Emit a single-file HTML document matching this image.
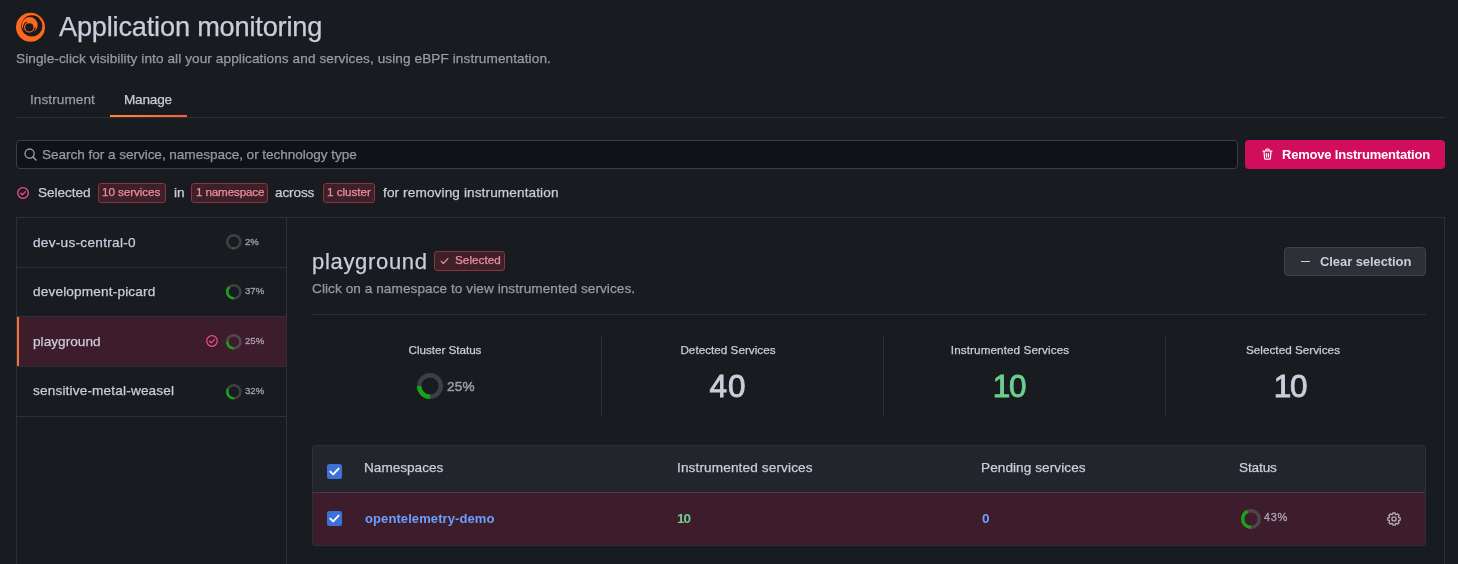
<!DOCTYPE html>
<html><head><meta charset="utf-8">
<style>
html,body{margin:0;padding:0;}
body{width:1458px;height:564px;overflow:hidden;background:#181b1f;position:relative;font-family:"Liberation Sans",sans-serif;color:#ccccdc;-webkit-font-smoothing:antialiased;}
.a{position:absolute;white-space:nowrap;line-height:1;will-change:transform;-webkit-text-stroke:0.25px currentColor;}
.b{position:absolute;box-sizing:border-box;}
svg{position:absolute;overflow:visible;}
</style></head>
<body>
<svg style="left:14px;top:11px" width="33" height="33" viewBox="14 11 33 33">
  <circle cx="30.5" cy="27.3" r="14.5" fill="#ff671d"/>
  <circle cx="31.8" cy="25.9" r="10.6" fill="#181b1f"/>
  <circle cx="29.7" cy="25.1" r="8.0" fill="#ff671d"/>
  <circle cx="29.35" cy="27.4" r="5.8" fill="none" stroke="#181b1f" stroke-width="1.1" stroke-dasharray="24.2 100"/>
  <circle cx="29.35" cy="27.4" r="4.1" fill="#181b1f"/>
</svg>
<div class="a" style="left:59.00px;top:12.90px;font-size:27.2px;letter-spacing:-0.2px;">Application monitoring</div>
<div class="a" style="left:16.00px;top:51.70px;font-size:13.6px;letter-spacing:0.09px;color:rgba(204,204,220,0.65);">Single-click visibility into all your applications and services, using eBPF instrumentation.</div>
<div class="a" style="left:30.00px;top:92.70px;font-size:13.6px;letter-spacing:0.07px;color:rgba(204,204,220,0.65);">Instrument</div>
<div class="a" style="left:124.30px;top:92.70px;font-size:13.6px;letter-spacing:-0.2px;">Manage</div>
<div class="b" style="left:16px;top:117px;width:1429px;height:1px;background:#2e3036;"></div>
<div class="b" style="left:110px;top:115px;width:77px;height:2px;background:linear-gradient(90deg,#ff8833,#f55f3e);"></div>
<div class="b" style="left:16px;top:140px;width:1222px;height:29px;background:#111217;border:1px solid #3c3e45;border-radius:4px;"></div>
<svg style="left:24px;top:148px" width="13" height="13" viewBox="0 0 13 13"><circle cx="5.6" cy="5.6" r="4.6" fill="none" stroke="#9fa0aa" stroke-width="1.3"/><path d="M9 9 L12 12" stroke="#9fa0aa" stroke-width="1.4" stroke-linecap="round"/></svg>
<div class="a" style="left:42.00px;top:147.70px;font-size:13.6px;letter-spacing:-0.05px;color:rgba(204,204,220,0.65);">Search for a service, namespace, or technology type</div>
<div class="b" style="left:1245px;top:140px;width:200px;height:29px;background:#d10e5c;border-radius:4px;"></div>
<svg style="left:1262px;top:148px" width="11" height="12" viewBox="0 0 11 12"><path d="M1 3 H10 M4 3 V1.6 Q4 1 4.6 1 H6.4 Q7 1 7 1.6 V3 M2 3 L2.6 10.4 Q2.7 11.2 3.5 11.2 H7.5 Q8.3 11.2 8.4 10.4 L9 3 M4.5 5.5 V9 M6.5 5.5 V9" fill="none" stroke="#fff" stroke-width="1.2" stroke-linecap="round" stroke-linejoin="round"/></svg>
<div class="a" style="left:1282.00px;top:148.00px;font-size:13px;font-weight:700;-webkit-text-stroke:0;letter-spacing:-0.2px;color:#fff;">Remove Instrumentation</div>
<svg style="left:17px;top:187px" width="12" height="12" viewBox="0 0 12 12"><circle cx="6" cy="6" r="5.3" fill="none" stroke="#f0508a" stroke-width="1.3"/><path d="M3.6 6.2 L5.3 7.8 L8.4 4.6" fill="none" stroke="#f0508a" stroke-width="1.3" stroke-linecap="round" stroke-linejoin="round"/></svg>
<div class="a" style="left:37.80px;top:185.70px;font-size:13.6px;letter-spacing:-0.05px;">Selected</div>
<div class="b" style="left:98px;top:183px;width:68px;height:20px;background:#3e2028;border:1px solid #8c3241;border-radius:3px;"></div>
<div class="a" style="left:102.30px;top:185.85px;font-size:11.7px;letter-spacing:-0.08px;color:#f08ca0;">10 services</div>
<div class="a" style="left:173.50px;top:185.70px;font-size:13.6px;">in</div>
<div class="b" style="left:191px;top:183px;width:77px;height:20px;background:#3e2028;border:1px solid #8c3241;border-radius:3px;"></div>
<div class="a" style="left:195.50px;top:185.85px;font-size:11.7px;letter-spacing:-0.17px;color:#f08ca0;">1 namespace</div>
<div class="a" style="left:275.30px;top:185.70px;font-size:13.6px;letter-spacing:-0.13px;">across</div>
<div class="b" style="left:323px;top:183px;width:52px;height:20px;background:#3e2028;border:1px solid #8c3241;border-radius:3px;"></div>
<div class="a" style="left:327.00px;top:185.85px;font-size:11.7px;letter-spacing:-0.03px;color:#f08ca0;">1 cluster</div>
<div class="a" style="left:382.70px;top:185.70px;font-size:13.6px;letter-spacing:0.12px;">for removing instrumentation</div>
<div class="b" style="left:16px;top:217px;width:1429px;height:360px;border:1px solid #2e3036;"></div>
<div class="b" style="left:286px;top:217px;width:1px;height:360px;background:#2e3036;"></div>
<div class="b" style="left:17px;top:267px;width:269px;height:1px;background:#2e3036;"></div>
<div class="b" style="left:17px;top:316px;width:269px;height:1px;background:#2e3036;"></div>
<div class="b" style="left:17px;top:366px;width:269px;height:1px;background:#2e3036;"></div>
<div class="b" style="left:17px;top:416px;width:269px;height:1px;background:#2e3036;"></div>
<div class="b" style="left:17px;top:317px;width:269px;height:49px;background:#3d1c2b;"></div>
<div class="b" style="left:17px;top:317px;width:2px;height:49px;background:#f2733a;"></div>
<div class="a" style="left:33.40px;top:235.70px;font-size:13.6px;letter-spacing:0.29px;">dev-us-central-0</div>
<div class="a" style="left:33.40px;top:285.20px;font-size:13.6px;letter-spacing:0.17px;">development-picard</div>
<div class="a" style="left:33.40px;top:334.70px;font-size:13.6px;letter-spacing:0.03px;">playground</div>
<div class="a" style="left:33.40px;top:384.20px;font-size:13.6px;letter-spacing:0.17px;">sensitive-metal-weasel</div>
<svg style="left:226.10px;top:234.20px" width="15.6" height="15.6" viewBox="0 0 15.6 15.6"><circle cx="7.8" cy="7.8" r="6.550" fill="none" stroke="#3e4044" stroke-width="2.5"/><circle cx="7.8" cy="7.8" r="6.550" fill="none" stroke="#18a318" stroke-width="2.5" stroke-dasharray="0.823 1000" transform="rotate(90 7.8 7.8)"/></svg>
<div class="a" style="left:244.60px;top:236.60px;font-size:9.6px;color:rgba(204,204,220,0.58);-webkit-text-stroke:0.4px currentColor;">2%</div>
<svg style="left:226.10px;top:284.20px" width="15.6" height="15.6" viewBox="0 0 15.6 15.6"><circle cx="7.8" cy="7.8" r="6.550" fill="none" stroke="#3e4044" stroke-width="2.5"/><circle cx="7.8" cy="7.8" r="6.550" fill="none" stroke="#18a318" stroke-width="2.5" stroke-dasharray="15.227 1000" transform="rotate(90 7.8 7.8)"/></svg>
<div class="a" style="left:244.60px;top:286.30px;font-size:9.6px;color:rgba(204,204,220,0.58);-webkit-text-stroke:0.4px currentColor;">37%</div>
<svg style="left:226.10px;top:334.20px" width="15.6" height="15.6" viewBox="0 0 15.6 15.6"><circle cx="7.8" cy="7.8" r="6.550" fill="none" stroke="#554650" stroke-width="2.5"/><circle cx="7.8" cy="7.8" r="6.550" fill="none" stroke="#18a318" stroke-width="2.5" stroke-dasharray="10.289 1000" transform="rotate(90 7.8 7.8)"/></svg>
<div class="a" style="left:244.60px;top:336.00px;font-size:9.6px;color:rgba(204,204,220,0.58);-webkit-text-stroke:0.4px currentColor;">25%</div>
<svg style="left:226.10px;top:383.50px" width="15.6" height="15.6" viewBox="0 0 15.6 15.6"><circle cx="7.8" cy="7.8" r="6.550" fill="none" stroke="#3e4044" stroke-width="2.5"/><circle cx="7.8" cy="7.8" r="6.550" fill="none" stroke="#18a318" stroke-width="2.5" stroke-dasharray="13.170 1000" transform="rotate(90 7.8 7.8)"/></svg>
<div class="a" style="left:244.60px;top:385.70px;font-size:9.6px;color:rgba(204,204,220,0.58);-webkit-text-stroke:0.4px currentColor;">32%</div>
<svg style="left:206px;top:335px" width="12" height="12" viewBox="0 0 12 12"><circle cx="6" cy="6" r="5.3" fill="none" stroke="#f0508a" stroke-width="1.2"/><path d="M3.6 6.2 L5.3 7.8 L8.4 4.6" fill="none" stroke="#f0508a" stroke-width="1.2" stroke-linecap="round" stroke-linejoin="round"/></svg>
<div class="a" style="left:311.60px;top:250.50px;font-size:22px;letter-spacing:0.68px;">playground</div>
<div class="b" style="left:434px;top:251px;width:71px;height:20px;background:#3e2028;border:1px solid #8c3241;border-radius:3px;"></div>
<svg style="left:440px;top:257px" width="9" height="8" viewBox="0 0 9 8"><path d="M1 4.2 L3.3 6.5 L8 1.5" fill="none" stroke="#f08ca0" stroke-width="1.1" stroke-linecap="round" stroke-linejoin="round"/></svg>
<div class="a" style="left:455.00px;top:253.85px;font-size:11.7px;letter-spacing:0.05px;color:#f08ca0;">Selected</div>
<div class="a" style="left:312.40px;top:281.70px;font-size:13.6px;letter-spacing:0.07px;color:rgba(204,204,220,0.65);">Click on a namespace to view instrumented services.</div>
<div class="b" style="left:1284px;top:247px;width:142px;height:29px;background:#2d3036;border:1px solid #3f4248;border-radius:4px;"></div>
<div class="b" style="left:1300.5px;top:260.5px;width:9.5px;height:1.5px;background:#ccccdc;"></div>
<div class="a" style="left:1320.00px;top:255.00px;font-size:13px;font-weight:700;-webkit-text-stroke:0;letter-spacing:-0.08px;">Clear selection</div>
<div class="b" style="left:312px;top:314px;width:1114px;height:1px;background:#2e3036;"></div>
<div class="b" style="left:601px;top:336px;width:1px;height:80px;background:#2e3036;"></div>
<div class="b" style="left:883px;top:336px;width:1px;height:80px;background:#2e3036;"></div>
<div class="b" style="left:1165px;top:336px;width:1px;height:80px;background:#2e3036;"></div>
<div class="a" style="left:445.30px;top:343.95px;font-size:11.7px;letter-spacing:-0.04px;transform:translateX(-50%);">Cluster Status</div>
<div class="a" style="left:727.60px;top:343.95px;font-size:11.7px;letter-spacing:0.02px;transform:translateX(-50%);">Detected Services</div>
<div class="a" style="left:1010.00px;top:343.95px;font-size:11.7px;letter-spacing:0.1px;transform:translateX(-50%);">Instrumented Services</div>
<div class="a" style="left:1292.50px;top:343.95px;font-size:11.7px;letter-spacing:0.03px;transform:translateX(-50%);">Selected Services</div>
<svg style="left:417.30px;top:373.20px" width="26" height="26" viewBox="0 0 26 26"><circle cx="13.0" cy="13.0" r="10.800" fill="none" stroke="#3d3f44" stroke-width="4.4"/><circle cx="13.0" cy="13.0" r="10.800" fill="none" stroke="#18a318" stroke-width="4.4" stroke-dasharray="16.965 1000" transform="rotate(90 13.0 13.0)"/></svg>
<div class="a" style="left:446.70px;top:379.90px;font-size:13.6px;letter-spacing:0.14px;color:rgba(204,204,220,0.62);-webkit-text-stroke:0.5px currentColor;">25%</div>
<div class="a" style="left:727.60px;top:371.25px;font-size:31.5px;letter-spacing:1.0px;transform:translateX(-50%);-webkit-text-stroke:0.9px currentColor;">40</div>
<div class="a" style="left:1008.50px;top:371.25px;font-size:31.5px;letter-spacing:-1.2px;color:#6ccf8e;transform:translateX(-50%);-webkit-text-stroke:0.9px currentColor;">10</div>
<div class="a" style="left:1290.20px;top:371.25px;font-size:31.5px;letter-spacing:-1.2px;transform:translateX(-50%);-webkit-text-stroke:0.9px currentColor;">10</div>
<div class="b" style="left:312px;top:445px;width:1114px;height:101px;border:1px solid #2e3036;border-radius:3px;overflow:hidden;">
  <div class="b" style="left:0;top:0;width:1112px;height:46px;background:#22252b;"></div>
  <div class="b" style="left:0;top:46px;width:1112px;height:1px;background:#4a3a44;"></div>
  <div class="b" style="left:0;top:47px;width:1112px;height:53px;background:#3d1c2b;"></div>
</div>
<svg style="left:327px;top:464px" width="15" height="15" viewBox="0 0 15 15"><rect x="0" y="0" width="15" height="15" rx="2.5" fill="#3d71d9"/><path d="M3.3 7.6 L6.2 10.4 L11.6 4.6" fill="none" stroke="#fff" stroke-width="1.9" stroke-linecap="round" stroke-linejoin="round"/></svg>
<svg style="left:327px;top:511px" width="15" height="15" viewBox="0 0 15 15"><rect x="0" y="0" width="15" height="15" rx="2.5" fill="#3d71d9"/><path d="M3.3 7.6 L6.2 10.4 L11.6 4.6" fill="none" stroke="#fff" stroke-width="1.9" stroke-linecap="round" stroke-linejoin="round"/></svg>
<div class="a" style="left:364.20px;top:461.40px;font-size:13.6px;">Namespaces</div>
<div class="a" style="left:676.70px;top:461.40px;font-size:13.6px;letter-spacing:0.13px;">Instrumented services</div>
<div class="a" style="left:981.00px;top:461.40px;font-size:13.6px;letter-spacing:0.07px;">Pending services</div>
<div class="a" style="left:1239.40px;top:461.40px;font-size:13.6px;letter-spacing:-0.13px;">Status</div>
<div class="a" style="left:364.70px;top:512.10px;font-size:13px;font-weight:700;-webkit-text-stroke:0;letter-spacing:0.09px;color:#6e9fff;">opentelemetry-demo</div>
<div class="a" style="left:677.00px;top:511.80px;font-size:13.6px;font-weight:700;-webkit-text-stroke:0;letter-spacing:-1.0px;color:#6ccf8e;">10</div>
<div class="a" style="left:981.50px;top:511.80px;font-size:13.6px;font-weight:700;-webkit-text-stroke:0;color:#6e9fff;">0</div>
<svg style="left:1241.00px;top:509.00px" width="20" height="20" viewBox="0 0 20 20"><circle cx="10.0" cy="10.0" r="8.300" fill="none" stroke="#52444c" stroke-width="3.4"/><circle cx="10.0" cy="10.0" r="8.300" fill="none" stroke="#18a318" stroke-width="3.4" stroke-dasharray="22.425 1000" transform="rotate(90 10.0 10.0)"/></svg>
<div class="a" style="left:1263.70px;top:511.60px;font-size:11px;letter-spacing:0.6px;color:rgba(204,204,220,0.6);-webkit-text-stroke:0.45px currentColor;">43%</div>
<svg style="left:1387px;top:512px" width="14" height="14" viewBox="0 0 14 14"><path d="M11.69 5.57 L13.20 5.91 L13.20 8.09 L11.69 8.43 L11.33 9.30 L12.16 10.61 L10.61 12.16 L9.30 11.33 L8.43 11.69 L8.09 13.20 L5.91 13.20 L5.57 11.69 L4.70 11.33 L3.39 12.16 L1.84 10.61 L2.67 9.30 L2.31 8.43 L0.80 8.09 L0.80 5.91 L2.31 5.57 L2.67 4.70 L1.84 3.39 L3.39 1.84 L4.70 2.67 L5.57 2.31 L5.91 0.80 L8.09 0.80 L8.43 2.31 L9.30 2.67 L10.61 1.84 L12.16 3.39 L11.33 4.70 Z" fill="none" stroke="#b7b3bd" stroke-width="1.3" stroke-linejoin="round"/><circle cx="7" cy="7" r="2.1" fill="none" stroke="#b7b3bd" stroke-width="1.3"/></svg>
</body></html>
